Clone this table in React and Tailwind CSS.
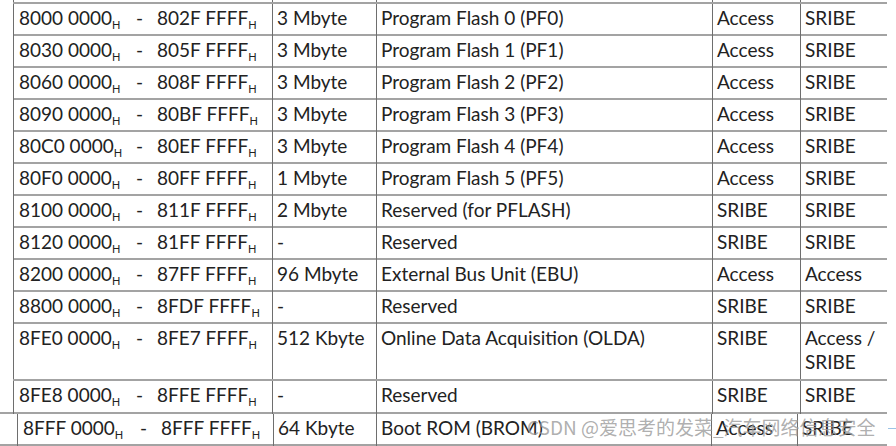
const rows = [
  { a: '8000 0000', b: '802F FFFF', size: '3 Mbyte', desc: 'Program Flash 0 (PF0)', p1: 'Access', p2: 'SRIBE' },
  { a: '8030 0000', b: '805F FFFF', size: '3 Mbyte', desc: 'Program Flash 1 (PF1)', p1: 'Access', p2: 'SRIBE' },
  { a: '8060 0000', b: '808F FFFF', size: '3 Mbyte', desc: 'Program Flash 2 (PF2)', p1: 'Access', p2: 'SRIBE' },
  { a: '8090 0000', b: '80BF FFFF', size: '3 Mbyte', desc: 'Program Flash 3 (PF3)', p1: 'Access', p2: 'SRIBE' },
  { a: '80C0 0000', b: '80EF FFFF', size: '3 Mbyte', desc: 'Program Flash 4 (PF4)', p1: 'Access', p2: 'SRIBE' },
  { a: '80F0 0000', b: '80FF FFFF', size: '1 Mbyte', desc: 'Program Flash 5 (PF5)', p1: 'Access', p2: 'SRIBE' },
  { a: '8100 0000', b: '811F FFFF', size: '2 Mbyte', desc: 'Reserved (for PFLASH)', p1: 'SRIBE', p2: 'SRIBE' },
  { a: '8120 0000', b: '81FF FFFF', size: '-', desc: 'Reserved', p1: 'SRIBE', p2: 'SRIBE' },
  { a: '8200 0000', b: '87FF FFFF', size: '96 Mbyte', desc: 'External Bus Unit (EBU)', p1: 'Access', p2: 'Access' },
  { a: '8800 0000', b: '8FDF FFFF', size: '-', desc: 'Reserved', p1: 'SRIBE', p2: 'SRIBE' },
  { a: '8FE0 0000', b: '8FE7 FFFF', size: '512 Kbyte', desc: 'Online Data Acquisition (OLDA)', p1: 'SRIBE', p2: 'Access /\nSRIBE', tall: true },
  { a: '8FE8 0000', b: '8FFE FFFF', size: '-', desc: 'Reserved', p1: 'SRIBE', p2: 'SRIBE', h33: true },
];

const last = { a: '8FFF 0000', b: '8FFF FFFF', size: '64 Kbyte', desc: 'Boot ROM (BROM)', p1: 'Access', p2: 'SRIBE' };

const cols = 'grid grid-cols-[259px_104px_336px_88px_87px]';
const cell = 'border-l border-[#6e6e6e] pl-[4px] pt-[2px]';

function Addr({ a, b }) {
  return (
    <span className="flex whitespace-nowrap">
      <span className="w-[118px] pl-[1px]">
        {a}<span className="text-[11px] align-[-4px]">H</span>
      </span>
      <span className="w-[21px]">-</span>
      <span>
        {b}<span className="text-[11px] align-[-4px]">H</span>
      </span>
    </span>
  );
}

function Row({ r }) {
  const h = r.tall ? 'h-[57px]' : r.h33 ? 'h-[33px]' : 'h-[32px]';
  return (
    <div className={`${cols} ${h} border-t-2 border-[#a3a3a3]`}>
      <div className={cell}><Addr a={r.a} b={r.b} /></div>
      <div className={cell}>{r.size}</div>
      <div className={cell}>{r.desc}</div>
      <div className={cell}>{r.p1}</div>
      <div className={`${cell} whitespace-pre-line`}>{r.p2}</div>
    </div>
  );
}

export default function App() {
  return (
    <div className="relative w-[896px] h-[446px] overflow-hidden bg-white text-[19px] leading-[24px] text-[#222222] font-['Lato',sans-serif]">
      <div className="ml-[13px] w-[874px]">
        <div className={`${cols} h-[2px]`}>
          <div className="border-l border-[#6e6e6e]" />
          <div className="border-l border-[#6e6e6e]" />
          <div className="border-l border-[#6e6e6e]" />
          <div className="border-l border-[#6e6e6e]" />
          <div className="border-l border-[#6e6e6e]" />
        </div>
        {rows.map((r) => (
          <Row key={r.a} r={r} />
        ))}
      </div>
      <div className="w-[887px] border-t-2 border-b-2 border-[#a3a3a3]">
        <div className="ml-[17px] grid grid-cols-[256px_103px_335px_86px_90px] h-[30px]">
          <div className={cell}><Addr a={last.a} b={last.b} /></div>
          <div className={cell}>{last.size}</div>
          <div className={cell}>{last.desc}</div>
          <div className={cell}>{last.p1}</div>
          <div className={cell}>{last.p2}</div>
        </div>
      </div>
      <div className="absolute left-[527px] top-[415px] whitespace-nowrap text-[19px] leading-[24px] text-[#9a9a9a]/80 font-['Noto_Sans_CJK_SC',sans-serif]">
        CSDN @爱思考的发菜_汽车网络信息安全
      </div>
      <div className="absolute left-[888px] top-[428px] w-[8px] h-[1px] bg-[#9cc3e6]" />
    </div>
  );
}
